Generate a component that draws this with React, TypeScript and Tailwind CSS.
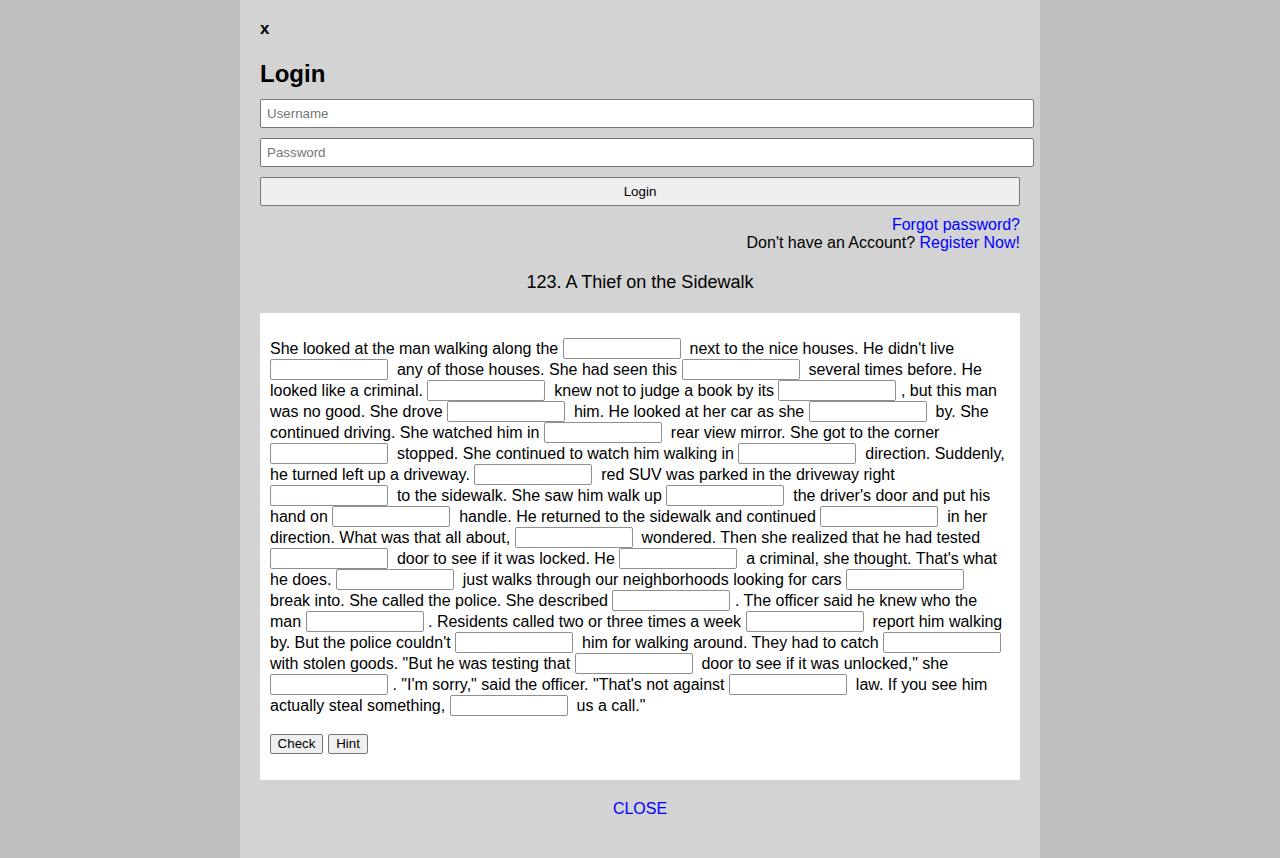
import React from 'react';

// --- Story text, "_" marks a blank ---
const STORY =
    "She looked at the man walking along the _ next to the nice houses. He didn't live _ any of those houses. She had seen this _ several times before. He looked like a criminal. _ knew not to judge a book by its _ , but this man was no good. She drove _ him. He looked at her car as she _ by. She continued driving. She watched him in _ rear view mirror. She got to the corner _ stopped. She continued to watch him walking in _ direction. Suddenly, he turned left up a driveway. _ red SUV was parked in the driveway right _ to the sidewalk. She saw him walk up _ the driver's door and put his hand on _ handle. He returned to the sidewalk and continued _ in her direction. What was that all about, _ wondered. Then she realized that he had tested _ door to see if it was locked. He _ a criminal, she thought. That's what he does. _ just walks through our neighborhoods looking for cars _ break into. She called the police. She described _ . The officer said he knew who the man _ . Residents called two or three times a week _ report him walking by. But the police couldn't _ him for walking around. They had to catch _ with stolen goods. \"But he was testing that _ door to see if it was unlocked,\" she _ . \"I'm sorry,\" said the officer. \"That's not against _ law. If you see him actually steal something, _ us a call.\"";

const Blank = () => (
    <input
        type="text"
        className="w-[118px] h-[21px] align-top border border-[#8f8f8f] rounded-[2px] bg-white px-[2px] text-[13.33px] outline-none"
    />
);

const Story = () => {
    const parts = STORY.split(' _ ');
    return (
        <p className="mt-[15px] mb-[18px] leading-[21px]">
            {parts.map((part, i) => {
                // words after a blank get an extra non-breaking space, punctuation does not
                const text = i === 0 ? part : /^[.,]/.test(part) ? ' ' + part : '\u00a0 ' + part;
                return (
                    <React.Fragment key={i}>
                        {text}
                        {i < parts.length - 1 && (
                            <>
                                {' '}
                                <Blank />
                            </>
                        )}
                    </React.Fragment>
                );
            })}
        </p>
    );
};

const btn = "h-[20px] border border-[#767676] rounded-[2px] bg-[#efefef] text-[13.33px] leading-[16px] text-black text-center";

export default function App() {
    return (
        <div className="min-h-screen bg-[#bfbfbf] text-black" style={{ fontFamily: '"Liberation Sans", Arial, sans-serif' }}>
            <div className="w-[800px] mx-auto min-h-screen bg-[#d3d3d3] px-5 pt-5 pb-5">
                <div className="text-[17px] leading-[18px] font-bold">x</div>

                <h2 className="mt-[22px] text-[24px] leading-[28px] font-bold">Login</h2>

                <div className="mt-[11px] flex flex-col gap-[10px]">
                    <input
                        type="text"
                        placeholder="Username"
                        className="box-content w-full h-[27px] px-[6px] border border-[#767676] rounded-[2px] bg-white text-[13.33px] placeholder:text-[#757575] outline-none"
                    />
                    <input
                        type="password"
                        placeholder="Password"
                        className="box-content w-full h-[27px] px-[6px] border border-[#767676] rounded-[2px] bg-white text-[13.33px] placeholder:text-[#757575] outline-none"
                    />
                    <button className="w-full h-[29px] border border-[#767676] rounded-[2px] bg-[#efefef] text-[13.33px]">
                        Login
                    </button>
                </div>

                <div className="mt-[10px] text-right text-[16px] leading-[18px]">
                    <a href="#" className="text-[#0000ff]">Forgot password?</a>
                    <div>
                        Don't have an Account? <a href="#" className="text-[#0000ff]">Register Now!</a>
                    </div>
                </div>

                <div className="mt-[20px] text-center text-[18px] leading-[21px]">123. A Thief on the Sidewalk</div>

                <div className="mt-[20px] bg-white p-[10px] text-[16px]">
                    <Story />
                    <div className="mb-4 flex gap-[5px]">
                        <button className={`${btn} w-[53px]`}>Check</button>
                        <button className={`${btn} w-[40px]`}>Hint</button>
                    </div>
                </div>

                <div className="mt-[20px] text-center text-[16px] leading-[18px]">
                    <a href="#" className="text-[#0000ff]">CLOSE</a>
                </div>
            </div>
        </div>
    );
}
